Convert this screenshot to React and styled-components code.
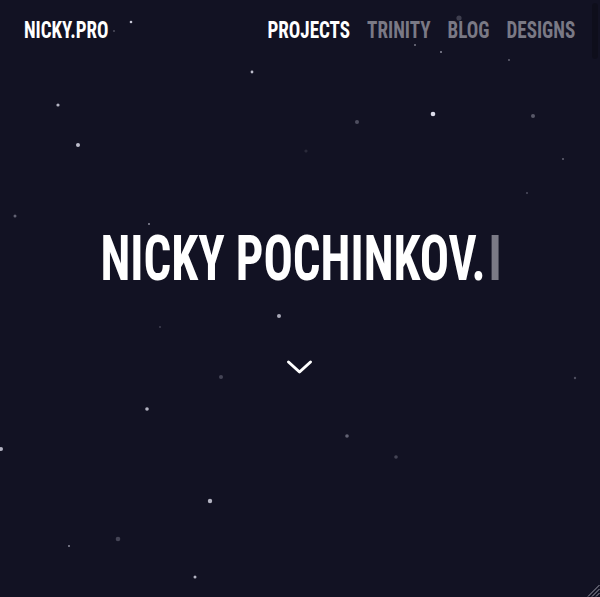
import React from "react";
import styled, { createGlobalStyle } from "styled-components";

const GlobalStyle = createGlobalStyle`
  html, body { margin: 0; padding: 0; background: #121223; }
  body { overflow: hidden; font-family: "Roboto", "Liberation Sans", sans-serif; }
`;

const Page = styled.div`
  position: relative;
  width: 600px;
  height: 597px;
  overflow: hidden;
  background: #121223;
  display: flex;
  flex-direction: column;
`;

const Sky = styled.svg`
  position: absolute;
  inset: 0;
  width: 600px;
  height: 597px;
  pointer-events: none;
`;

const Header = styled.header`
  position: relative;
  display: flex;
  justify-content: space-between;
  align-items: flex-start;
  padding: 18px 25px 0 24px;
`;

const condensed = `
  font-family: "Roboto", "Liberation Sans", sans-serif;
  font-stretch: 75%;
  font-weight: 700;
  text-transform: uppercase;
  white-space: nowrap;
`;

const Logo = styled.a`
  ${condensed}
  display: inline-block;
  font-size: 24px;
  line-height: 24px;
  color: #ffffff;
  text-decoration: none;
  transform: scaleX(${p => p.$sx});
  transform-origin: left center;
`;

const NavList = styled.nav`
  display: flex;
  gap: ${p => p.$gap}px;
  transform: scaleX(${p => p.$sx});
  transform-origin: right center;
`;

const NavItem = styled.a`
  ${condensed}
  font-size: 24px;
  line-height: 24px;
  color: ${p => (p.$active ? "#ffffff" : "#7a7985")};
  text-decoration: none;
`;

const Hero = styled.main`
  position: relative;
  display: flex;
  flex-direction: column;
  align-items: center;
  margin-top: 185px;
`;

const Title = styled.h1`
  ${condensed}
  margin: 0;
  display: inline-flex;
  align-items: flex-start;
  font-size: 63px;
  line-height: 63px;
  color: #ffffff;
  transform: scaleX(${p => p.$sx});
  transform-origin: center center;
`;

const Cursor = styled.span`
  display: inline-block;
  width: ${p => p.$w}px;
  height: 45px;
  margin-top: 8px;
  margin-left: ${p => p.$gap}px;
  background: #7b7a86;
`;

const Chevron = styled.svg`
  margin-top: 69px;
  margin-left: -1px;
  display: block;
`;

const ScrollThumb = styled.div`
  position: absolute;
  top: 3px;
  right: 2px;
  width: 6px;
  height: 56px;
  border-radius: 3px;
  background: rgba(0, 0, 0, 0.22);
`;

const Grip = styled.svg`
  position: absolute;
  right: 0;
  bottom: 0;
`;

const stars = [
  [131, 22, 1.3, 0.9], [114, 31, 0.8, 0.5], [252, 72, 1.4, 0.85], [58, 105, 1.6, 0.8],
  [78, 145, 2, 0.85], [433, 114, 2.3, 1], [357, 122, 2, 0.3], [533, 116, 2, 0.35],
  [306, 151, 1.6, 0.12], [415, 45, 1, 0.5], [441, 52, 1, 0.6], [509, 60, 1, 0.4],
  [563, 159, 1, 0.4], [527, 193, 1, 0.3], [459, 18, 2.6, 0.22], [15, 216, 1.5, 0.4],
  [149, 224, 1, 0.6], [279, 316, 2, 0.75], [160, 327, 0.8, 0.4], [221, 377, 2, 0.25],
  [575, 378, 1.2, 0.3], [147, 409, 1.8, 0.8], [1, 449, 2, 0.8], [347, 436, 1.8, 0.4],
  [396, 457, 1.8, 0.25], [210, 501, 2.2, 0.8], [118, 539, 2.3, 0.25], [69, 546, 1, 0.6],
  [195, 577, 1.5, 0.8],
];

const LOGO_SX = 0.79;
const NAV_SX = 0.795;
const TITLE_SX = 0.773;

export default function App() {
  return (
    <>
      <GlobalStyle />
      <Page>
        <Sky viewBox="0 0 600 597">
          {stars.map(([x, y, r, o], i) => (
            <circle key={i} cx={x} cy={y} r={r} fill="#dcdcea" opacity={o} />
          ))}
        </Sky>
        <Header>
          <Logo href="#" $sx={LOGO_SX}>Nicky.pro</Logo>
          <NavList $sx={NAV_SX} $gap={17 / NAV_SX}>
            <NavItem href="#" $active>Projects</NavItem>
            <NavItem href="#">Trinity</NavItem>
            <NavItem href="#">Blog</NavItem>
            <NavItem href="#">Designs</NavItem>
          </NavList>
        </Header>
        <Hero>
          <Title $sx={TITLE_SX}>
            Nicky Pochinkov.
            <Cursor $w={7 / TITLE_SX} $gap={6 / TITLE_SX} />
          </Title>
          <Chevron width="27" height="16" viewBox="0 0 27 16">
            <polyline
              points="2.5,3 13.5,13 24.5,3"
              fill="none"
              stroke="#ffffff"
              strokeWidth="3"
              strokeLinecap="round"
              strokeLinejoin="round"
            />
          </Chevron>
        </Hero>
        <ScrollThumb />
        <Grip width="14" height="14" viewBox="0 0 14 14">
          <g stroke="#9a9aa8" strokeWidth="1">
            <line x1="13.5" y1="2" x2="2" y2="13.5" />
            <line x1="13.5" y1="6" x2="6" y2="13.5" />
            <line x1="13.5" y1="10" x2="10" y2="13.5" />
          </g>
        </Grip>
      </Page>
    </>
  );
}
